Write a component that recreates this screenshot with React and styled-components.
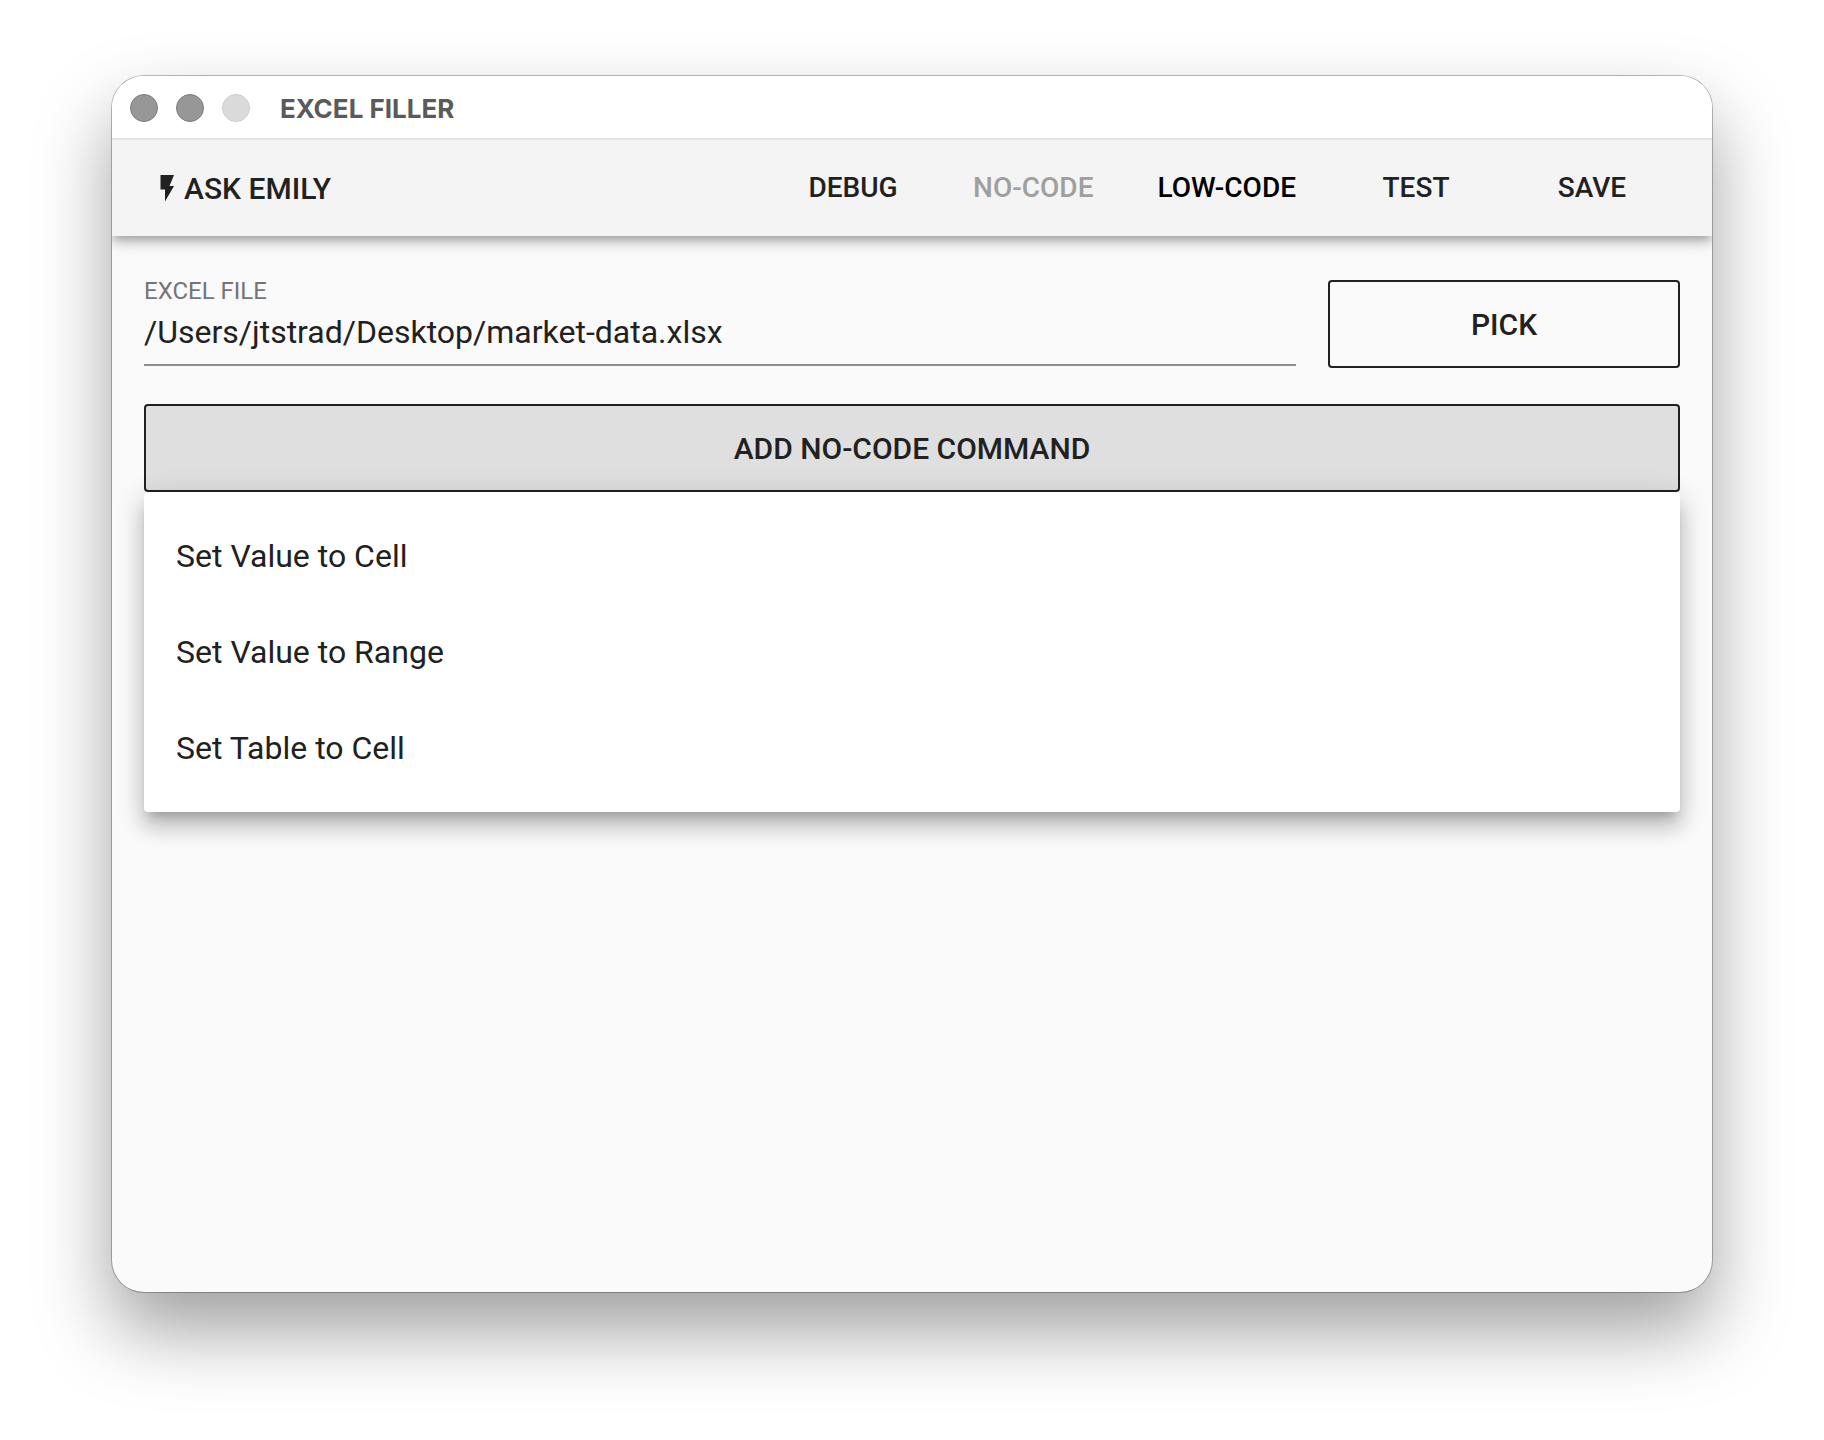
import React from "react";
import styled, { createGlobalStyle } from "styled-components";

const GlobalStyle = createGlobalStyle`
  *, *::before, *::after { box-sizing: border-box; }
  body {
    margin: 0;
    background: #fff;
    color: #212121;
    font-family: Roboto, "Liberation Sans", sans-serif;
  }
  button, input { font: inherit; color: inherit; }
`;

const Desktop = styled.div`
  display: flex;
  min-height: 100vh;
  padding: 76px 112px 148px;
`;

const Window = styled.div`
  flex: 1;
  display: flex;
  flex-direction: column;
  min-width: 0;
  overflow: hidden;
  border-radius: 32px;
  background: #fafafa;
  box-shadow: 0 0 0 1px rgba(0, 0, 0, 0.26), 0 38px 76px rgba(0, 0, 0, 0.38);
`;

const TitleBar = styled.div`
  position: relative;
  z-index: 1;
  display: flex;
  align-items: center;
  height: 64px;
  padding: 2px 18px 0;
  background: #fff;
  border-bottom: 2px solid #e4e4e4;
`;

const WindowControls = styled.div`
  display: flex;
  gap: 18px;
  margin-right: 30px;
`;

const WindowButton = styled.button`
  width: 28px;
  height: 28px;
  padding: 0;
  border: 1px solid ${(p) => (p.disabled ? "#cdcdcd" : "#7b7b7b")};
  border-radius: 50%;
  background: ${(p) => (p.disabled ? "#dadada" : "#979797")};
`;

const Title = styled.h1`
  margin: 0;
  padding-top: 2px;
  color: #5a5a5a;
  font: 700 26px/32px Inter, sans-serif;
`;

const Toolbar = styled.header`
  display: flex;
  align-items: center;
  justify-content: space-between;
  height: 96px;
  padding: 0 32px;
  background: #f4f4f4;
  box-shadow: 0 4px 8px -2px rgba(0, 0, 0, 0.2),
    0 8px 10px rgba(0, 0, 0, 0.14), 0 2px 20px rgba(0, 0, 0, 0.12);
`;

const Brand = styled.button`
  display: flex;
  align-items: center;
  padding: 2px 16px 0;
  border: 0;
  background: none;
  font-size: 30px;
  font-weight: 500;
  line-height: 40px;
`;

const BoltIcon = styled.svg`
  width: 14px;
  height: 28px;
  margin-right: 10px;
  fill: currentColor;
`;

const Nav = styled.nav`
  display: flex;
`;

const NavButton = styled.button`
  min-width: 176px;
  height: 72px;
  padding: 0 32px;
  border: 0;
  background: none;
  color: ${(p) => (p.disabled ? "#9f9f9f" : p.$strong ? "#000" : "#212121")};
  font-size: 28px;
  font-weight: 500;
  line-height: 40px;
`;

const Content = styled.main`
  display: flex;
  flex-direction: column;
  gap: 36px;
  padding: 44px 32px 32px;
`;

const FileRow = styled.div`
  display: flex;
  gap: 32px;
`;

const Field = styled.div`
  flex: 0 0 75%;
  display: flex;
  flex-direction: column;
  height: 86px;
  border-bottom: 2px solid #8f8f8f;
`;

const FieldLabel = styled.label`
  color: #757575;
  font-size: 24px;
  line-height: 22px;
`;

const FieldInput = styled.input`
  flex: 1;
  width: 100%;
  padding: 0 0 2px;
  border: 0;
  outline: 0;
  background: none;
  font-size: 32px;
`;

const OutlinedButton = styled.button`
  flex: 1;
  width: 100%;
  height: 88px;
  padding: 2px 32px 0;
  border: 2px solid #212121;
  border-radius: 4px;
  background: ${(p) => (p.$active ? "#dfdfdf" : "transparent")};
  font-size: 30px;
  font-weight: 500;
  line-height: 40px;
`;

const Dropdown = styled.div`
  position: relative;
  display: flex;
`;

const Menu = styled.div`
  position: absolute;
  top: 100%;
  left: 0;
  right: 0;
  display: flex;
  flex-direction: column;
  padding: 16px 0;
  border-radius: 4px;
  background: #fff;
  box-shadow: 0 10px 10px -6px rgba(0, 0, 0, 0.2),
    0 16px 20px 2px rgba(0, 0, 0, 0.14), 0 6px 28px 4px rgba(0, 0, 0, 0.12);
`;

const MenuItem = styled.button`
  height: 96px;
  padding: 0 32px;
  border: 0;
  background: none;
  font-size: 32px;
  line-height: 40px;
  text-align: left;
`;

const commands = ["Set Value to Cell", "Set Value to Range", "Set Table to Cell"];

export default function App() {
  return (
    <>
      <GlobalStyle />
      <Desktop>
        <Window>
          <TitleBar>
            <WindowControls>
              <WindowButton aria-label="Close" />
              <WindowButton aria-label="Minimize" />
              <WindowButton aria-label="Zoom" disabled />
            </WindowControls>
            <Title>EXCEL FILLER</Title>
          </TitleBar>
          <Toolbar>
            <Brand>
              <BoltIcon viewBox="0 0 14 28" aria-hidden="true">
                <path d="M0.500 0H14L9.500 11H14L5 26.500V14.500H0.500Z" />
              </BoltIcon>
              ASK EMILY
            </Brand>
            <Nav>
              <NavButton>DEBUG</NavButton>
              <NavButton disabled>NO-CODE</NavButton>
              <NavButton $strong>LOW-CODE</NavButton>
              <NavButton>TEST</NavButton>
              <NavButton>SAVE</NavButton>
            </Nav>
          </Toolbar>
          <Content>
            <FileRow>
              <Field>
                <FieldLabel htmlFor="excel-file">EXCEL FILE</FieldLabel>
                <FieldInput
                  id="excel-file"
                  type="text"
                  defaultValue="/Users/jtstrad/Desktop/market-data.xlsx"
                />
              </Field>
              <OutlinedButton>PICK</OutlinedButton>
            </FileRow>
            <Dropdown>
              <OutlinedButton $active aria-haspopup="menu" aria-expanded="true">
                ADD NO-CODE COMMAND
              </OutlinedButton>
              <Menu role="menu">
                {commands.map((command) => (
                  <MenuItem key={command} role="menuitem">
                    {command}
                  </MenuItem>
                ))}
              </Menu>
            </Dropdown>
          </Content>
        </Window>
      </Desktop>
    </>
  );
}
